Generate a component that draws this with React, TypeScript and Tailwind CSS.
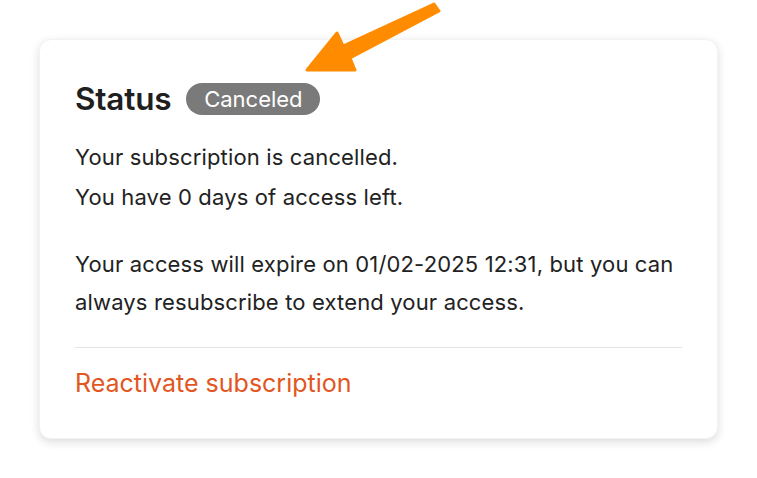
export default function App() {
  return (
    <div className="relative w-[757px] h-[478px] bg-white" style={{ fontFamily: 'Inter, "Noto Sans", sans-serif' }}>
      <div className="pt-[39px] pl-[39px]">
        <div className="w-[679px] rounded-[12px] bg-white shadow-[0_3px_10px_rgba(0,0,0,0.14)] border border-[#f3f3f3] px-[35px] pt-[35px] pb-[36px]">
          <div className="flex items-center h-12 gap-[15px]">
            <h1 className="text-[31.5px] font-semibold text-[#1f1f1f] tracking-[-0.2px]">Status</h1>
            <span className="inline-flex items-center justify-center h-[32px] w-[134px] rounded-full bg-[#7a7a7a] text-white text-[22px] leading-none">Canceled</span>
          </div>
          <div className="mt-[15px] text-[22px] text-[#222222] tracking-[0.15px]">
            <p className="leading-[39.5px]">Your subscription is cancelled.</p>
            <p className="leading-[39.5px]">You have 0 days of access left.</p>
          </div>
          <p className="mt-[28px] text-[22px] leading-[38px] text-[#222222] tracking-[0.15px]">
            Your access will expire on 01/02-2025 12:31, but you can always resubscribe to extend your access.
          </p>
          <div className="mt-[26px] h-px bg-[#e4e4e4]" />
          <div className="mt-[16px] leading-[38px] text-[25px] text-[#e2561f]">Reactivate subscription</div>
        </div>
      </div>
      <svg className="absolute left-0 top-0" width="757" height="478" viewBox="0 0 757 478">
        <path
          d="M434,4 L343,46 L337,33 L307,70 L355,70 L350,58 L439,11 Z"
          fill="#ff8c00"
          stroke="#ff8c00"
          strokeWidth="3"
          strokeLinejoin="round"
        />
      </svg>
    </div>
  );
}
